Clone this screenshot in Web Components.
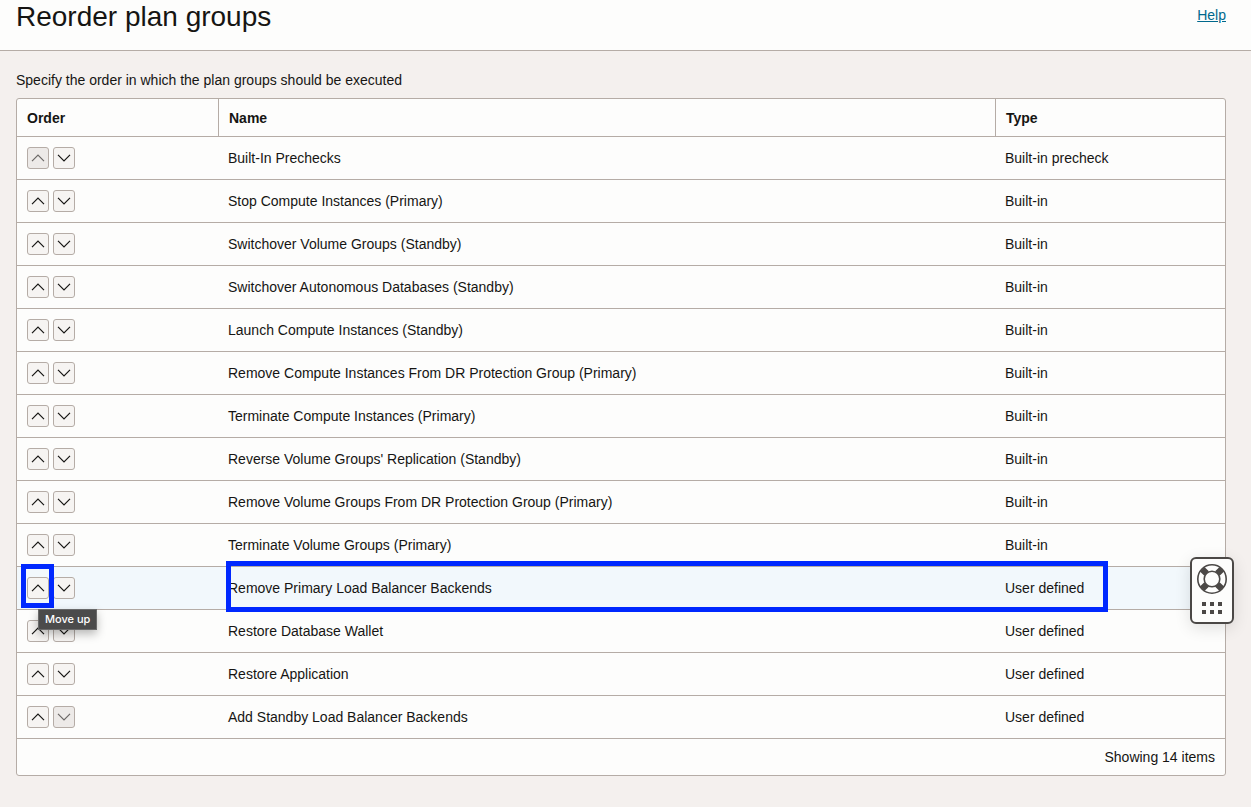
<!DOCTYPE html>
<html lang="en">
<head>
<meta charset="utf-8">
<meta name="viewport" content="width=device-width, initial-scale=1">
<title>Reorder plan groups</title>
<style>
  body {
    margin: 0;
    min-height: 100vh;
    background: #f4f0ee;
    color: #161513;
    font: 14px/20px "Liberation Sans", Helvetica, Arial, sans-serif;
    --surface: #fdfdfc;
    --line: #b5aca6;
    --mark: #0028ff;
  }
</style>
</head>
<body>
<page-shell>
  <span slot="title">Reorder plan groups</span>
  <a slot="help" href="#help">Help</a>
  <span slot="intro">Specify the order in which the plan groups should be executed</span>
  <plan-groups></plan-groups>
</page-shell>
<support-widget></support-widget>

<script>
class PageShell extends HTMLElement {
  constructor() {
    super();
    this.attachShadow({ mode: "open" }).innerHTML = `
      <style>
        :host { display: block; }
        header {
          display: flex;
          justify-content: space-between;
          align-items: flex-start;
          padding: 0 25px 16px 16px;
          background: var(--surface);
          border-bottom: 1px solid var(--line);
        }
        h1 { margin: 0; font-size: 28px; line-height: 34px; font-weight: 400; }
        nav { padding-top: 5px; }
        ::slotted(a) { color: #00688c; text-decoration: underline; }
        main { padding: 19px 25px 31px 16px; }
        p { margin: 0 0 8px; }
      </style>
      <header>
        <h1><slot name="title"></slot></h1>
        <nav><slot name="help"></slot></nav>
      </header>
      <main>
        <p><slot name="intro"></slot></p>
        <slot></slot>
      </main>`;
  }
}
customElements.define("page-shell", PageShell);

class MoveButton extends HTMLElement {
  connectedCallback() {
    const up = this.getAttribute("direction") === "up";
    this.attachShadow({ mode: "open" }).innerHTML = `
      <style>
        :host { display: block; }
        button {
          display: grid;
          place-items: center;
          box-sizing: border-box;
          width: 22px;
          height: 22px;
          padding: 0;
          color: #161513;
          background: #f6f4f2;
          border: 1px solid #b5aca6;
          border-radius: 3px;
        }
        button:disabled { background: #edeae8; color: #6b6866; }
        svg { display: block; fill: none; stroke: currentColor; stroke-width: 1.2; }
      </style>
      <button type="button" aria-label="Move ${up ? "up" : "down"}" ${this.hasAttribute("disabled") ? "disabled" : ""}>
        <svg width="14" height="8" viewBox="0 0 14 8" aria-hidden="true">
          <path d="${up ? "M1 7.2 7 1.2 13 7.2" : "M1 .8 7 6.8 13 .8"}"/>
        </svg>
      </button>`;
  }
}
customElements.define("move-button", MoveButton);

class HintTip extends HTMLElement {
  constructor() {
    super();
    this.attachShadow({ mode: "open" }).innerHTML = `
      <style>
        :host {
          display: block;
          padding: 1px 6px 2px;
          background: #4b4b4b;
          border: 1px solid #6a6a6a;
          box-shadow: 0 4px 10px rgba(0, 0, 0, .28);
          color: #fff;
          font: 500 11px/16px Inter, sans-serif;
          white-space: nowrap;
        }
      </style>
      <slot></slot>`;
  }
}
customElements.define("hint-tip", HintTip);

class FocusFrame extends HTMLElement {
  constructor() {
    super();
    this.attachShadow({ mode: "open" }).innerHTML = `
      <style>
        :host {
          display: block;
          box-sizing: border-box;
          border: 5px solid var(--mark);
          pointer-events: none;
        }
      </style>`;
  }
}
customElements.define("focus-frame", FocusFrame);

const GROUPS = [
  ["Built-In Prechecks", "Built-in precheck"],
  ["Stop Compute Instances (Primary)", "Built-in"],
  ["Switchover Volume Groups (Standby)", "Built-in"],
  ["Switchover Autonomous Databases (Standby)", "Built-in"],
  ["Launch Compute Instances (Standby)", "Built-in"],
  ["Remove Compute Instances From DR Protection Group (Primary)", "Built-in"],
  ["Terminate Compute Instances (Primary)", "Built-in"],
  ["Reverse Volume Groups' Replication (Standby)", "Built-in"],
  ["Remove Volume Groups From DR Protection Group (Primary)", "Built-in"],
  ["Terminate Volume Groups (Primary)", "Built-in"],
  ["Remove Primary Load Balancer Backends", "User defined"],
  ["Restore Database Wallet", "User defined"],
  ["Restore Application", "User defined"],
  ["Add Standby Load Balancer Backends", "User defined"]
];
const ACTIVE = 10;

class PlanGroups extends HTMLElement {
  constructor() {
    super();
    const last = GROUPS.length - 1;
    const rows = GROUPS.map(([name, type], i) => {
      const active = i === ACTIVE;
      return `
        <tr class="${active ? "active" : ""}">
          <td><div class="order">
            <move-button direction="up" ${i === 0 ? "disabled" : ""}></move-button>
            <move-button direction="down" ${i === last ? "disabled" : ""}></move-button>
            ${active ? `<focus-frame class="on-button"></focus-frame><hint-tip role="tooltip">Move up</hint-tip>` : ""}
          </div></td>
          <td>${name}</td>
          <td>${type}${active ? `<focus-frame class="on-row"></focus-frame>` : ""}</td>
        </tr>`;
    }).join("");
    this.attachShadow({ mode: "open" }).innerHTML = `
      <style>
        :host {
          display: block;
          background: var(--surface);
          border: 1px solid var(--line);
          border-radius: 3px;
        }
        table { width: 100%; table-layout: fixed; border-spacing: 0; }
        .col-order { width: 201px; }
        .col-type { width: 230px; }
        th, td { padding: 0 10px; text-align: left; border-bottom: 1px solid var(--line); }
        th { padding-block: 9px 8px; font-weight: 700; }
        th + th { border-left: 1px solid var(--line); }
        td { padding-block: 10px; }
        .order { position: relative; display: flex; gap: 4px; }
        .active { position: relative; z-index: 1; background: #f2f8fc; }
        .on-button { position: absolute; top: -13px; left: -6px; width: 33px; height: 44px; }
        .on-row { position: absolute; inset: -6px 117px -2px 209px; }
        hint-tip { position: absolute; top: 32px; left: 11px; }
        footer { padding: 8px 10px; text-align: right; }
      </style>
      <table>
        <colgroup><col class="col-order"><col><col class="col-type"></colgroup>
        <thead><tr><th scope="col">Order</th><th scope="col">Name</th><th scope="col">Type</th></tr></thead>
        <tbody>${rows}</tbody>
      </table>
      <footer>Showing ${GROUPS.length} items</footer>`;
  }
}
customElements.define("plan-groups", PlanGroups);

class SupportWidget extends HTMLElement {
  constructor() {
    super();
    this.attachShadow({ mode: "open" }).innerHTML = `
      <style>
        :host { display: block; position: fixed; right: 17px; bottom: 183px; z-index: 2; }
        button {
          display: flex;
          flex-direction: column;
          align-items: center;
          gap: 8px;
          box-sizing: border-box;
          width: 44px;
          height: 67px;
          padding: 5px 0;
          color: #4b4846;
          background: var(--surface);
          border: 2px solid currentColor;
          border-radius: 6px;
          box-shadow: 0 4px 16px rgba(0, 0, 0, .12);
        }
        svg { display: block; }
      </style>
      <button type="button" aria-label="Support">
        <svg width="30" height="30" viewBox="0 0 30 30" fill="none" stroke="currentColor" aria-hidden="true">
          <path stroke-width="6.4" d="M5.2 5.2 9.6 9.6M24.8 5.2 20.4 9.6M5.2 24.8 9.6 20.4M24.8 24.8 20.4 20.4"/>
          <circle cx="15" cy="15" r="14.2" stroke-width="1.6"/>
          <circle cx="15" cy="15" r="7.8" stroke-width="1.6" fill="#fdfdfc"/>
        </svg>
        <svg width="20" height="12" viewBox="0 0 20 12" fill="currentColor" aria-hidden="true">
          <path d="M0 0h4v4H0zM8 0h4v4H8zM16 0h4v4h-4zM0 8h4v4H0zM8 8h4v4H8zM16 8h4v4h-4z"/>
        </svg>
      </button>`;
  }
}
customElements.define("support-widget", SupportWidget);
</script>
</body>
</html>
